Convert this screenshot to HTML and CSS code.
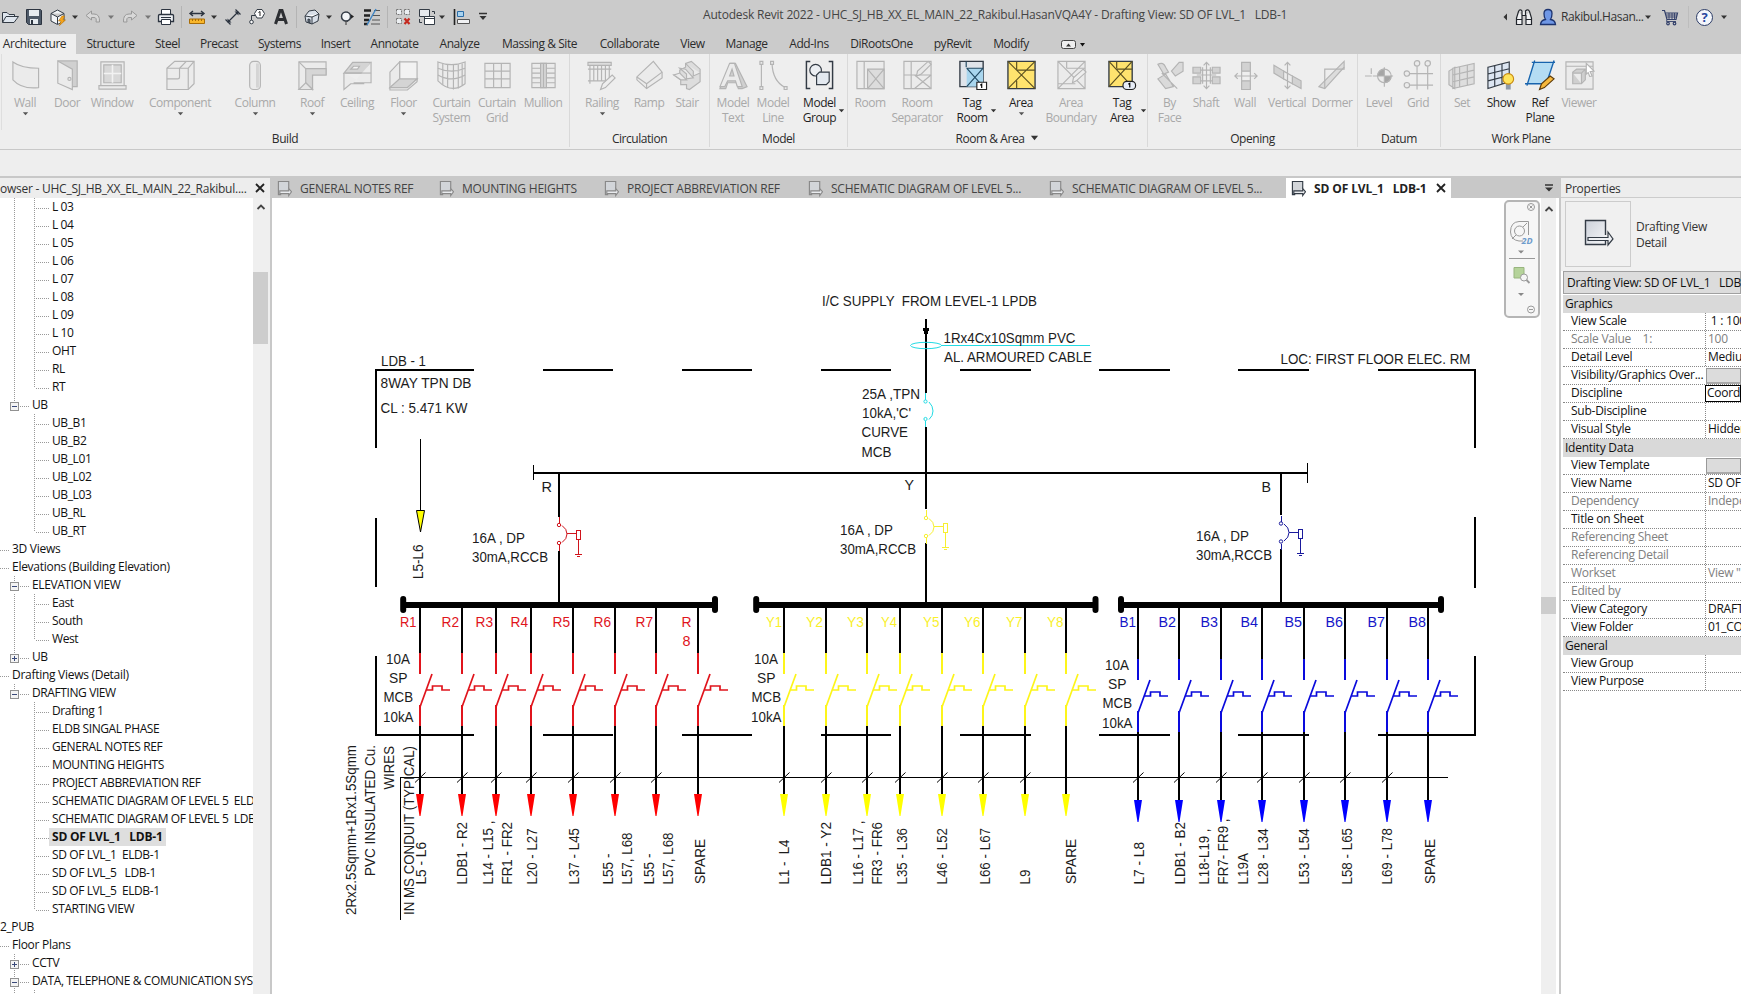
FILE: index.html
```html
<!DOCTYPE html>
<html lang="en">
<head>
<meta charset="utf-8">
<title>Autodesk Revit 2022</title>
<link rel="stylesheet" href="styles.css">
</head>
<body>
<svg class="defs" width="0" height="0">
  <defs>
    <symbol id="dd" viewBox="0 0 8 8"><path d="M1 2.5h6L4 6z" fill="currentColor"/></symbol>
    <symbol id="sheet" viewBox="0 0 16 18"><path d="M12.500 9V1.500h-11v14h3" fill="#d2d5d9" stroke="currentColor" stroke-width="1.200"/><path d="M3 11.500h9.500V9L15.500 12.500 12.500 16.500V14.500H3z" fill="#e9ebee" stroke="currentColor" stroke-width="1.200"/></symbol>
    <linearGradient id="pg" x1="0" y1="0" x2="1" y2="1"><stop offset="0" stop-color="#ccd1da"/><stop offset="1" stop-color="#f4f5f7"/></linearGradient>
    <g id="breaker" fill="none" stroke="currentColor" stroke-width="2">
      <path d="M0 45V66M0 97V118"/>
      <path d="M0 99L12 66M6 82H12.500V78H22V82H30" shape-rendering="auto" stroke-width="1.700"/>
    </g>
    <g id="way">
      <path d="M0 0V45M0 117V187" stroke="#000" stroke-width="2"/>
      <use href="#breaker"/>
      <path d="M-4 186H4L.5 208H-.5z" class="tip" shape-rendering="auto"/>
    </g>
    <path id="slash" d="M-5 5L5.500-5" stroke="#000" stroke-width="1" shape-rendering="auto"/>
    <g id="rccb" fill="none" stroke="currentColor" stroke-width="1">
      <path d="M.5 0V6M.5 28V34M8 16.500H17M19.500 23V37M16 37.500H23M18 39.500H21M17.500 13.500H21.500V22.500H17.500z"/>
      <g shape-rendering="auto"><circle cx="0" cy="8" r="1.700"/><circle cx="0" cy="26" r="1.700"/><path d="M3 8.500Q8 12 8 17T3 25.500"/></g>
    </g>
  </defs>
</svg>

<header class="titlebar">
  <div class="qat">
    <svg class="i" viewBox="0 0 18 18" fill="#dfe6ee" stroke="#333b45"><path d="M1.500 14.500V4.500H6L8 6.500H13.500V8"/><path d="M1.500 14.500L5 8.500H17.500L13 14.500z"/></svg>
    <svg class="i" viewBox="0 0 18 18"><path d="M1.500 1.500h14l1 1v14h-13l-2-2z" fill="#4d5968" stroke="#2c3440"/><path d="M4 2h10v6H4zM5 11h8v5H5z" fill="#e6ebf0"/><path d="M6 12h2v4H6z" fill="#2c3440"/></svg>
    <svg class="i" viewBox="0 0 18 18"><path d="M2 5.500L8.500 2 15 5.500V13L8.500 16.500 2 13zM2 5.500L8.500 9 15 5.500M8.500 9V16" fill="#f3f5f7" stroke="#333b45"/><path d="M13 8L9.500 13H12L10.500 17.500 16.500 12H14L15.500 8z" fill="#f7a51c" stroke="#b4720c" stroke-width=".6"/></svg>
    <svg class="a"><use href="#dd"/></svg>
    <svg class="i" viewBox="0 0 18 18"><path d="M2 7.500L7.500 3V6H10Q16 6 15.500 14H12Q13 9.500 10 9.500H7.500V12z" fill="#d8d8d8" stroke="#999"/></svg>
    <svg class="a dim"><use href="#dd"/></svg>
    <svg class="i" viewBox="0 0 18 18"><path d="M16 7.500L10.500 3V6H8Q2 6 2.500 14H6Q5 9.500 8 9.500H10.500V12z" fill="#d8d8d8" stroke="#999"/></svg>
    <svg class="a dim"><use href="#dd"/></svg>
    <svg class="i" viewBox="0 0 18 18" stroke="#2c3440"><path d="M4.500 7V1.500H13.500V7" fill="#fff"/><path d="M1.500 7.500Q1.500 6.500 3 6.500H15Q16.500 6.500 16.500 7.500V13.500H1.500z" fill="#eef0f3" stroke-width="1.300"/><path d="M4.500 11.500H13.500V16.500H4.500zM4 9.500H14" fill="#fff"/></svg>
    <i class="vr"></i>
    <svg class="i" viewBox="0 0 18 18"><path d="M2 5.500H16M5 3L2 5.500 5 8M13 3L16 5.500 13 8" fill="none" stroke="#2c3440" stroke-width="1.400"/><path d="M1.500 11h15v4.500h-15z" fill="#f8b62b" stroke="#a96d07"/><path d="M4.500 11v2M7.500 11v2M10.500 11v2M13.500 11v2" stroke="#a96d07"/></svg>
    <svg class="a"><use href="#dd"/></svg>
    <svg class="i" viewBox="0 0 18 18"><path d="M4 14L14 4M1.500 11.500L6.500 16.500M11.500 1.500L16.500 6.500" stroke="#2c3440" stroke-width="1.200"/><path d="M3.500 14.500V10.500L7.500 14.500zM14.500 3.500V7.500L10.500 3.500z" fill="#2c3440"/></svg>
    <svg class="i" viewBox="0 0 18 18"><path d="M6.500 5.500L9 1.500H14L16.500 5.500 14 10H9z" fill="#fff" stroke="#333b45"/><path d="M10.500 4.500L12 3.500V8" fill="none" stroke="#222"/><path d="M7 7.500H3.500V12" fill="none" stroke="#333b45"/><circle cx="3.500" cy="14" r="1.800" fill="#fff" stroke="#333b45"/></svg>
    <svg class="i" viewBox="0 0 18 18"><path d="M3.500 16L8 2.500H10L14.500 16M5.500 11.500H12.500" fill="none" stroke="#2d2f33" stroke-width="3"/></svg>
    <i class="vr"></i>
    <svg class="i" viewBox="0 0 18 18" stroke="#333b45"><path d="M2 8L6 3 12 2 16 6 15 13 9 16 3 14z" fill="#d8dfe8"/><path d="M2 8L9 9 16 6M9 9V16" fill="#fff"/><path d="M5 11V14L7 15V11.500z" fill="#6d7886"/></svg>
    <svg class="a"><use href="#dd"/></svg>
    <svg class="i" viewBox="0 0 18 18"><path d="M9 3.500L16 8.500 9 14z" fill="#222"/><circle cx="8" cy="8.500" r="4.500" fill="#f3f5f7" stroke="#333b45" stroke-width="1.500"/><path d="M8 13v4" stroke="#333"/></svg>
    <svg class="i" viewBox="0 0 18 18"><path d="M1 2.500H8M1 7.500H7M1 12H6M1 16H5" stroke="#222" stroke-width="2.600"/><path d="M11 2.500H17M10 7.500H17M9 12H17M8 16H17" stroke="#555"/><path d="M4 17L13 1" stroke="#3c83c4" stroke-width="1.400"/></svg>
    <i class="vr"></i>
    <svg class="i" viewBox="0 0 18 18"><path d="M2.500 1.500h5v5h-5zM10.500 1.500h5v5h-5zM2.500 10.500h5v5h-5z" fill="#eceff2" stroke="#777" stroke-dasharray="2 1"/><path d="M10.500 10.500L15.500 16M15.500 10.500L10.500 16" stroke="#c42a20" stroke-width="2.200"/></svg>
    <svg class="i" viewBox="0 0 18 18" stroke="#333b45"><path d="M1.500 1.500H11.500V8.500H1.500z" fill="#e6e9ed"/><path d="M6.500 8.500H16.500V16.500H6.500zM6.500 10.500H16.500" fill="#fff"/><path d="M14 3.500H16.500V6M4 14.500H1.500V11" fill="none"/></svg>
    <svg class="a"><use href="#dd"/></svg>
    <svg class="i" viewBox="0 0 18 18"><path d="M1.500 1V17" stroke="#222" stroke-width="1.600"/><path d="M4.500 3.500H10.500V8.500H4.500z" fill="#a9d3f0" stroke="#2a6da8"/><path d="M4.500 11.500H16.500V15.500H4.500z" fill="#f0f1f3" stroke="#555"/></svg>
    <svg class="a w10" viewBox="0 0 10 10"><path d="M1 1.500H9" stroke="#333" stroke-width="1.500"/><path d="M1.500 4H8.500L5 8z" fill="#333"/></svg>
  </div>
  <div class="apptitle">Autodesk Revit 2022 - UHC_SJ_HB_XX_EL_MAIN_22_Rakibul.HasanVQA4Y - Drafting View: SD OF LVL_1   LDB-1</div>
  <div class="account">
    <svg class="a" viewBox="0 0 8 8"><path d="M6 0.500V7.500L2.500 4z" fill="#333"/></svg>
    <svg class="i" viewBox="0 0 18 18" fill="#f0f1f3" stroke="#22262c" stroke-width="1.200"><path d="M3.500 3.500Q5 .5 7 3V8M10.500 8V3Q13 .5 14.500 3.500M3.500 3.500L1.500 10V16.500H7V7.500H11V16.500H16.500V10L14.500 3.500M1.500 11.500H7M11 11.500H16.500"/></svg>
    <svg class="i" viewBox="0 0 18 18"><path d="M1.500 16.500Q2 12 6.500 11.500Q5 9 5 5.500 5 1.500 9 1.500T13 5.500Q13 9 11.500 11.500 16 12 16.500 16.500z" fill="#6f97e6" stroke="#1d3470" stroke-width="1.300"/></svg>
    <span class="user">Rakibul.Hasan...</span>
    <svg class="a"><use href="#dd"/></svg>
    <svg class="i" viewBox="0 0 18 18" fill="none" stroke="#33406a" stroke-width="1.200"><path d="M1 2.500H3.500L6 11.500H15L16.500 5H4.200"/><path d="M5 7H16M5.500 9H15.500M8 5V11M11 5V11M13.500 5V11M6 11.500L5.500 13.500H15" stroke-width=".9"/><circle cx="7" cy="15.500" r="1.300"/><circle cx="13.500" cy="15.500" r="1.300"/></svg>
    <i class="vr light"></i>
    <span class="help">?</span>
    <svg class="a"><use href="#dd"/></svg>
  </div>
</header>

<nav class="tabs">
  <span class="on">Architecture</span><span>Structure</span><span>Steel</span><span>Precast</span><span>Systems</span><span>Insert</span><span>Annotate</span><span>Analyze</span><span>Massing &amp; Site</span><span>Collaborate</span><span>View</span><span>Manage</span><span>Add-Ins</span><span>DiRootsOne</span><span>pyRevit</span><span>Modify</span>
  <svg class="mini" viewBox="0 0 26 12"><rect x="1.500" y="1.500" width="14" height="8" rx="2" fill="#eee" stroke="#444"/><path d="M6 7.500H11L8.500 4.500z" fill="#333"/><path d="M20 4H25L22.500 7.500z" fill="#111"/></svg>
</nav>

<section class="ribbon">
  <div class="panel build">
    <div class="tools">
      <div class="b off"><svg class="ic" viewBox="0 0 32 32"><path d="M3 2.500Q12 9 29.500 9V29Q12 31 3 21z"/></svg><span>Wall</span><svg class="d"><use href="#dd"/></svg></div>
      <div class="b off"><svg class="ic" viewBox="0 0 32 32"><path d="M6 1.500H26V28H20" fill="#d0d0d0"/><path d="M6 1.500L21 10V31L6 24.500z"/><circle cx="18" cy="20" r="1.600"/></svg><span>Door</span></div>
      <div class="b off"><svg class="ic" viewBox="0 0 32 32"><path d="M4 2.500H28V27H4z"/><path d="M7 5.500H25V24H7z" fill="#d8d8d8"/><path d="M16 5.500V24M7 14.500H25" stroke="#f2f2f2" stroke-width="1.600"/><path d="M2 27H30V30.500H2z"/></svg><span>Window</span></div>
      <div class="b off"><svg class="ic" viewBox="0 0 32 32"><path d="M2 9L10 2H30V25L24 31H2z"/><path d="M2 20H13Q15 20 15 18V9L22 2M15 9H2M24 31V9L30 2M15 9H24" fill="none"/></svg><span>Component</span><svg class="d"><use href="#dd"/></svg></div>
      <div class="b off"><svg class="ic" viewBox="0 0 32 32"><rect x="10" y="2" width="11" height="29" rx="4"/><path d="M18 4V29" stroke="#d4d4d4" stroke-width="3"/></svg><span>Column</span><svg class="d"><use href="#dd"/></svg></div>
      <div class="b off"><svg class="ic" viewBox="0 0 32 32"><path d="M2 2.500H30V16H16V31H2z"/><path d="M2 2.500L9 9.500H30V16H16V31L9 24V9.500" fill="#d6d6d6"/><path d="M2 31L9 24 16 31z" fill="#e6e6e6"/></svg><span>Roof</span><svg class="d"><use href="#dd"/></svg></div>
      <div class="b off"><svg class="ic" viewBox="0 0 32 32"><path d="M2 14L11 3H30L23 14z" fill="#d4d4d4"/><path d="M30 3V24H12M2 14V31L9 25H23"/><path d="M2 14H30" /><path d="M9 10H16L18 7H12z" fill="#f5f5f5"/></svg><span>Ceiling</span></div>
      <div class="b off"><svg class="ic" viewBox="0 0 32 32"><path d="M12 2.500H30V21H12z" fill="#f2f2f2"/><path d="M2 13L12 2.500V20L2 29z"/><path d="M12 20H30L20 29H2z" fill="#d4d4d4"/><path d="M2 29H20L30 20V23L20 31.500H2z"/></svg><span>Floor</span><svg class="d"><use href="#dd"/></svg></div>
      <div class="b off"><svg class="ic" viewBox="0 0 32 32"><path d="M2 2.500Q16 8 30 2.500V25Q16 36 2 22z"/><path d="M2 9Q16 15 30 9M2 16Q16 24 30 16M7 4V26M12 5V29M18 5.500V31M23 5V30M27 4V27" fill="none"/></svg><span>Curtain<br>System</span></div>
      <div class="b off"><svg class="ic" viewBox="0 0 32 32"><path d="M3 4H29V29H3zM3 12H29M3 20H29M12 4V29M20 4V29"/></svg><span>Curtain<br>Grid</span></div>
      <div class="b off"><svg class="ic" viewBox="0 0 32 32"><path d="M4 4H28V29H4zM4 9H28M4 14H28M4 19H28M4 24H28"/><path d="M13 4H19V29H13zM16 4V29" fill="#d6d6d6"/></svg><span>Mullion</span></div>
    </div>
    <div class="pt">Build</div>
  </div>
  <div class="panel circ">
    <div class="tools">
      <div class="b off"><svg class="ic" viewBox="0 0 32 32"><path d="M1 3H25V6H1zM1 22H25M1 10H25M3 6V25M7 6V22M11 6V22M15 6V22M19 6V22M23 6V22" fill="#ddd"/><path d="M14 31L16 25 26 16 29 19 19 29z" fill="#eee"/></svg><span>Railing</span><svg class="d"><use href="#dd"/></svg></div>
      <div class="b off"><svg class="ic" viewBox="0 0 32 32"><path d="M3 18L20 2 29 13V19L13 30 3 21z"/><path d="M13 25L29 13M13 25L3 18M13 25V30" fill="none"/></svg><span>Ramp</span></div>
      <div class="b off"><svg class="ic" viewBox="0 0 32 32"><path d="M2 16H8V11L14 8 14 4 20 2 29 10V23L18 31 15 30V26H9V21z" fill="#ddd"/><path d="M2 16L9 21H15L8 14zM8 9L15 15V20L22 19 14 10zM14 4L22 12V17L29 14" /></svg><span>Stair</span></div>
    </div>
    <div class="pt">Circulation</div>
  </div>
  <div class="panel model">
    <div class="tools">
      <div class="b off"><svg class="ic" viewBox="0 0 32 32"><path d="M2 30L13 4H18L30 28 25 30H21L19 24H10L8 30z" fill="#d0d0d0"/><path d="M2 28L12 4H17L25 28H20L18 22H10L7 28zM12 17H16.500L14.500 10z"/></svg><span>Model<br>Text</span></div>
      <div class="b off"><svg class="ic" viewBox="0 0 32 32"><path d="M3.500 4V29M14.500 4Q15 22 28 29" fill="none"/><path d="M2 2H5V5H2zM2 28H5V31H2zM13 2H16V5H13zM27 28H30V31H27z"/></svg><span>Model<br>Line</span></div>
      <div class="b"><svg class="ic col" viewBox="0 0 32 32"><path d="M6.500 2H2.500V30H6.500M25.500 2H29.500V30H25.500" fill="none" stroke="#333b45" stroke-width="1.500"/><circle cx="12" cy="11" r="6" fill="#eceff3" stroke="#333b45" stroke-width="1.200"/><path d="M13 16L16 13H26V23L23 26H13z" fill="#e3e9f0" stroke="#333b45" stroke-width="1.200"/></svg><span class="two">Model<br>Group</span><svg class="side"><use href="#dd"/></svg></div>
    </div>
    <div class="pt">Model</div>
  </div>
  <div class="panel room">
    <div class="tools">
      <div class="b off"><svg class="ic" viewBox="0 0 32 32"><path d="M2 2H30V30H2zM9.500 2V30"/><path d="M13 10H30V30H13zM13 10L30 30M30 10L13 30" fill="#dcdcdc"/></svg><span>Room</span></div>
      <div class="b off"><svg class="ic" viewBox="0 0 32 32"><path d="M2 2H30V30H2zM9.500 2V30"/><path d="M13 16L30 30M30 16L13 30M2 16H30" /><path d="M15 17L16 12 27 2 30 5 20 15z" fill="#e8e8e8"/></svg><span>Room<br>Separator</span></div>
      <div class="b"><svg class="ic col" viewBox="0 0 32 32"><path d="M3 2H27V28H3z" fill="#dfe4ea" stroke="#333b45" stroke-width="1.400"/><path d="M10 9H27V28H10z" fill="#a9d6ee"/><path d="M10 9L27 28M27 9L10 28M9.500 2V8M10 9H27" stroke="#234a63" fill="none"/><path d="M20.500 23.500H30.500V31H20.500z" fill="#fff" stroke="#222"/><path d="M24 26.500L25.500 25.500V29.500" fill="none" stroke="#000"/></svg><span class="two">Tag<br>Room</span><svg class="side"><use href="#dd"/></svg></div>
      <div class="b"><svg class="ic col" viewBox="0 0 32 32"><path d="M2 2H30V30H2z" fill="#ffe36e" stroke="#333b45" stroke-width="1.400"/><path d="M2 2L30 30M30 2L2 30M11 2V10M11 11H30M11 22V30" fill="none" stroke="#5b5020"/></svg><span>Area</span><svg class="d"><use href="#dd"/></svg></div>
      <div class="b off"><svg class="ic" viewBox="0 0 32 32"><path d="M2 2H30V30H2zM2 2L30 30M30 2L2 30M11 2V9M11 9H30M2 25H20"/><path d="M17 24L18 19 28 10 31 13 21 22z" fill="#eee"/></svg><span>Area<br>Boundary</span></div>
      <div class="b"><svg class="ic col" viewBox="0 0 32 32"><path d="M2 2H26V28H2z" fill="#ffe36e" stroke="#333b45" stroke-width="1.400"/><path d="M2 2L26 28M26 2L2 28M10 2V9M10 10H26" fill="none" stroke="#5b5020"/><rect x="16.500" y="22.500" width="13" height="8.500" rx="4" fill="#e8eef8" stroke="#222"/><path d="M22 25.500L23.500 24.500V29" fill="none" stroke="#000"/></svg><span class="two">Tag<br>Area</span><svg class="side"><use href="#dd"/></svg></div>
    </div>
    <div class="pt">Room &amp; Area <svg class="pd" viewBox="0 0 10 8"><path d="M1 1.500H9L5 6.500z" fill="#333"/></svg></div>
  </div>
  <div class="panel opening">
    <div class="tools">
      <div class="b off"><svg class="ic" viewBox="0 0 32 32"><path d="M4 5Q10 2 12 8L15 13 10 15zM18 12L26 3H30V12L22 17zM4 20L12 15 20 28 12 30zM8 14L24 30" fill="#dadada"/></svg><span>By<br>Face</span></div>
      <div class="b off"><svg class="ic" viewBox="0 0 32 32"><path d="M2 8H10V14H2zM22 8H30V14H22zM2 18H10V25H2zM22 18H30V25H22z" fill="#d2d2d2"/><path d="M10 11H22M10 22H22M16 3V30M13 6L16 3 19 6M13 27L16 30 19 27M6 16H26M12 8V25M20 8V25" fill="none"/></svg><span>Shaft</span></div>
      <div class="b off"><svg class="ic" viewBox="0 0 32 32"><path d="M12 3H21V12H12zM12 22H21V31H12z" fill="#d2d2d2"/><path d="M12 12V22M21 12V22M5 17H28M8 14L5 17 8 20M25 14L28 17 25 20" fill="none"/></svg><span>Wall</span></div>
      <div class="b off"><svg class="ic" viewBox="0 0 32 32"><path d="M2 6L12 12V20L2 14zM21 17L30 22V30L21 25z" fill="#d2d2d2"/><path d="M12 12L21 17V25L12 20zM16 3V30M13 6L16 3 19 6M13 27L16 30 19 27"/></svg><span>Vertical</span></div>
      <div class="b off"><svg class="ic" viewBox="0 0 32 32"><path d="M2 28L28 2V8L8 30z" fill="#dcdcdc"/><path d="M8 30V10H28V8" fill="none"/></svg><span>Dormer</span></div>
    </div>
    <div class="pt">Opening</div>
  </div>
  <div class="panel datum">
    <div class="tools">
      <div class="b off"><svg class="ic" viewBox="0 0 32 32"><path d="M1 17H8M7.500 9V15M9 17H30M21 8V28"/><circle cx="21" cy="17" r="7"/><path d="M21 10A7 7 0 0 0 14 17H21zM21 24A7 7 0 0 0 28 17H21z" fill="#a5a5a5"/></svg><span>Level</span></div>
      <div class="b off"><svg class="ic" viewBox="0 0 32 32"><path d="M14.500 7V31M25.500 7V31M7 14.500H31M7 26.500H31"/><circle cx="14.500" cy="4" r="2.800"/><circle cx="25.500" cy="4" r="2.800"/><circle cx="4" cy="14.500" r="2.800"/><circle cx="4" cy="26.500" r="2.800"/></svg><span>Grid</span></div>
    </div>
    <div class="pt">Datum</div>
  </div>
  <div class="panel plane">
    <div class="tools">
      <div class="b off"><svg class="ic" viewBox="0 0 32 32"><path d="M2 12L8 8V30L2 26zM6 9L28 4V25L6 30zM6 16L28 11M6 23L28 18M13 7.500V28.500M21 5.500V26.500" fill="#dedede"/></svg><span>Set</span></div>
      <div class="b"><svg class="ic col" viewBox="0 0 32 32"><path d="M2 8L24 2.500V23L2 30zM2 15L24 9.500M2 22L24 16.500M9 6V28M16.500 4.500V25.500" fill="#dde6f2" stroke="#333b45" stroke-width="1.200"/><path d="M20.500 25H25.500V31H20.500z" fill="#8f9aa8"/><circle cx="23" cy="20" r="5.500" fill="#ffe45c" stroke="#c78a12"/></svg><span>Show</span></div>
      <div class="b"><svg class="ic col" viewBox="0 0 32 32"><path d="M9 3H29L22 25H2z" fill="#b4dcf3"/><path d="M7 3H31M0 25H24M10 1L2 27M30 1L22 25" fill="none" stroke="#1763ad" stroke-width="1.400"/><path d="M15 31L17 25 26 17 30 20 20 29z" fill="#f6b83c" stroke="#5c3a0a"/></svg><span>Ref<br>Plane</span></div>
      <div class="b off"><svg class="ic" viewBox="0 0 32 32"><path d="M2 2.500H30V30.500H2zM2 7H30"/><path d="M9 13L13 10H22V21L18 25H9zM18 25V14H9M18 14L22 10" fill="#cfcfcf"/><path d="M23 4L31 12 27 12.500 29 17 26.500 17.500 25 13.500 23 15z" fill="#fff"/></svg><span>Viewer</span></div>
    </div>
    <div class="pt">Work Plane</div>
  </div>
</section>

<main class="work">
  <aside class="browser">
    <div class="bhead"><span>owser - UHC_SJ_HB_XX_EL_MAIN_22_Rakibul....</span><svg class="x" viewBox="0 0 10 10"><path d="M1 1L9 9M9 1L1 9" stroke="#222" stroke-width="1.800"/></svg></div>
    <div class="bbody">
      <div class="tree">
        <div class="r l2 v">L 03</div><div class="r l2 v">L 04</div><div class="r l2 v">L 05</div><div class="r l2 v">L 06</div><div class="r l2 v">L 07</div><div class="r l2 v">L 08</div><div class="r l2 v">L 09</div><div class="r l2 v">L 10</div><div class="r l2 v">OHT</div><div class="r l2 v">RL</div><div class="r l2 v end">RT</div>
        <div class="r l1"><b class="pm"></b>UB</div>
        <div class="r l2">UB_B1</div><div class="r l2">UB_B2</div><div class="r l2">UB_L01</div><div class="r l2">UB_L02</div><div class="r l2">UB_L03</div><div class="r l2">UB_RL</div><div class="r l2 end">UB_RT</div>
        <div class="r l0">3D Views</div>
        <div class="r l0">Elevations (Building Elevation)</div>
        <div class="r l1"><b class="pm"></b>ELEVATION VIEW</div>
        <div class="r l2 v">East</div><div class="r l2 v">South</div><div class="r l2 v end">West</div>
        <div class="r l1"><b class="pm plus"></b>UB</div>
        <div class="r l0">Drafting Views (Detail)</div>
        <div class="r l1"><b class="pm"></b>DRAFTING VIEW</div>
        <div class="r l2">Drafting 1</div><div class="r l2">ELDB SINGAL PHASE</div><div class="r l2">GENERAL NOTES REF</div><div class="r l2">MOUNTING HEIGHTS</div><div class="r l2">PROJECT ABBREVIATION REF</div><div class="r l2">SCHEMATIC DIAGRAM OF LEVEL 5  ELDB</div><div class="r l2">SCHEMATIC DIAGRAM OF LEVEL 5  LDB</div><div class="r l2"><span class="sel">SD OF LVL_1   LDB-1</span></div><div class="r l2">SD OF LVL_1  ELDB-1</div><div class="r l2">SD OF LVL_5   LDB-1</div><div class="r l2">SD OF LVL_5  ELDB-1</div><div class="r l2 end">STARTING VIEW</div>
        <div class="r top">2_PUB</div>
        <div class="r l0">Floor Plans</div>
        <div class="r l1 cont"><b class="pm plus"></b>CCTV</div>
        <div class="r l1 cont"><b class="pm"></b>DATA, TELEPHONE &amp; COMUNICATION SYSTEM</div>
        <div class="r l2 v"></div>
      </div>
      <div class="scroll"><svg class="up" viewBox="0 0 10 10"><path d="M1.500 7L5 3.500 8.500 7" fill="none" stroke="#444" stroke-width="1.800"/></svg><i class="thumb"></i></div>
    </div>
  </aside>

  <section class="center">
    <div class="doctabs">
      <div class="dt"><svg><use href="#sheet"/></svg>GENERAL NOTES REF</div>
      <div class="dt"><svg><use href="#sheet"/></svg>MOUNTING HEIGHTS</div>
      <div class="dt"><svg><use href="#sheet"/></svg>PROJECT ABBREVIATION REF</div>
      <div class="dt"><svg><use href="#sheet"/></svg>SCHEMATIC DIAGRAM OF LEVEL 5...</div>
      <div class="dt"><svg><use href="#sheet"/></svg>SCHEMATIC DIAGRAM OF LEVEL 5...</div>
      <div class="dt act"><svg><use href="#sheet"/></svg><span>SD OF LVL_1   LDB-1</span><svg class="x" viewBox="0 0 10 10"><path d="M1 1L9 9M9 1L1 9" stroke="#222" stroke-width="1.800"/></svg></div>
      <svg class="list" viewBox="0 0 10 10"><path d="M1 2H9" stroke="#333" stroke-width="1.500"/><path d="M1 4.500H9L5 8.500z" fill="#333"/></svg>
    </div>
    <div class="canvas">
      <svg class="drawing" viewBox="272 198 1269 796" shape-rendering="crispEdges">
        <!-- enclosure outline -->
        <g stroke="#000" stroke-width="2" fill="none">
          <path d="M375 370H474M543 370H613M682 370H752M821 370H891M960 370H1031M1099 370H1170M1238 370H1309M1378 370H1476"/>
          <path d="M375 735H474M543 735H613M682 735H752M821 735H891M960 735H1031M1099 735H1170M1238 735H1309M1378 735H1476"/>
          <path d="M376 370V448M376 518V587M376 656V735M1475 370V448M1475 517V588M1475 656V735"/>
          <path d="M533 473H1307M559 473V517M559 551V602M926 319V393M926 427V509M926 543V602M1281 473V515M1281 549V602"/>
        </g>
        <path d="M533.500 465V480M1307.500 463V483M420.500 439V511M400.500 920V777.500H1448" stroke="#000" fill="none"/>
        <path d="M922.500 328H929.500L927 336H925z"/>
        <path d="M416.500 510.500H424.500L420.500 532z" fill="#ff0" stroke="#000" shape-rendering="auto"/>
        <!-- incoming cable and main breaker -->
        <g fill="none" stroke="#22dbe4" shape-rendering="auto">
          <ellipse cx="926" cy="345.500" rx="15.500" ry="3.200"/>
          <path d="M941 345.500H1090M925.500 393V400M925.500 421V427"/>
          <circle cx="925.500" cy="401.500" r="1.600"/><circle cx="925.500" cy="419" r="1.600"/>
          <path d="M929 402Q933 406 933 411T929 419.500"/>
        </g>
        <use href="#rccb" x="559" y="517" color="#d0141c"/>
        <use href="#rccb" x="926" y="510" color="#f7f030"/>
        <use href="#rccb" x="1281" y="515.500" color="#1a1a9c"/>
        <!-- busbars -->
        <path d="M403 605H715M756 605H1096M1121 605H1441" stroke="#000" stroke-width="6"/>
        <path d="M403.200 599V610M715 599V610M756.200 599V610M1095.500 599V610M1121 599V610M1441 599V610" stroke="#000" stroke-width="6" stroke-linecap="round" shape-rendering="auto"/>
        <g class="ways-r">
          <use href="#way" x="420" y="608"/><use href="#way" x="462" y="608"/><use href="#way" x="496" y="608"/><use href="#way" x="531" y="608"/><use href="#way" x="573" y="608"/><use href="#way" x="615" y="608"/><use href="#way" x="656" y="608"/><use href="#way" x="698" y="608"/>
        </g>
        <g class="ways-y">
          <use href="#way" x="784" y="608"/><use href="#way" x="826" y="608"/><use href="#way" x="867" y="608"/><use href="#way" x="900" y="608"/><use href="#way" x="942" y="608"/><use href="#way" x="983" y="608"/><use href="#way" x="1025" y="608"/><use href="#way" x="1066" y="608"/>
        </g>
        <path d="M1138 607V616M1179 607V616M1221 607V616M1262 607V616M1304 607V616M1345 607V616M1387 607V616M1428 607V616" stroke="#000" stroke-width="2"/>
        <g class="ways-b">
          <use href="#way" x="1138" y="614"/><use href="#way" x="1179" y="614"/><use href="#way" x="1221" y="614"/><use href="#way" x="1262" y="614"/><use href="#way" x="1304" y="614"/><use href="#way" x="1345" y="614"/><use href="#way" x="1387" y="614"/><use href="#way" x="1428" y="614"/>
        </g>
        <g>
          <use href="#slash" x="420" y="777.500"/><use href="#slash" x="462" y="777.500"/><use href="#slash" x="496" y="777.500"/><use href="#slash" x="531" y="777.500"/><use href="#slash" x="573" y="777.500"/><use href="#slash" x="615" y="777.500"/><use href="#slash" x="656" y="777.500"/>
          <use href="#slash" x="784" y="777.500"/><use href="#slash" x="826" y="777.500"/><use href="#slash" x="867" y="777.500"/><use href="#slash" x="900" y="777.500"/><use href="#slash" x="942" y="777.500"/><use href="#slash" x="983" y="777.500"/><use href="#slash" x="1025" y="777.500"/>
          <use href="#slash" x="1138" y="777.500"/><use href="#slash" x="1179" y="777.500"/><use href="#slash" x="1221" y="777.500"/><use href="#slash" x="1262" y="777.500"/><use href="#slash" x="1304" y="777.500"/><use href="#slash" x="1345" y="777.500"/><use href="#slash" x="1387" y="777.500"/>
        </g>
        <g class="t">
          <text x="381" y="366" textLength="45" lengthAdjust="spacingAndGlyphs">LDB - 1</text>
          <text x="380.500" y="388" textLength="91" lengthAdjust="spacingAndGlyphs">8WAY TPN DB</text>
          <text x="380.500" y="413" textLength="87" lengthAdjust="spacingAndGlyphs">CL : 5.471 KW</text>
          <text x="822" y="306" textLength="215" lengthAdjust="spacingAndGlyphs">I/C SUPPLY  FROM LEVEL-1 LPDB</text>
          <text x="943.500" y="343" textLength="132" lengthAdjust="spacingAndGlyphs">1Rx4Cx10Sqmm PVC</text>
          <text x="944" y="362" textLength="148" lengthAdjust="spacingAndGlyphs">AL. ARMOURED CABLE</text>
          <text x="1280.500" y="364" textLength="190" lengthAdjust="spacingAndGlyphs">LOC: FIRST FLOOR ELEC. RM</text>
          <text x="862" y="399" textLength="58" lengthAdjust="spacingAndGlyphs">25A ,TPN</text>
          <text x="862" y="418" textLength="49" lengthAdjust="spacingAndGlyphs">10kA,'C'</text>
          <text x="861.500" y="437" textLength="46.500" lengthAdjust="spacingAndGlyphs">CURVE</text>
          <text x="861.500" y="457" textLength="30" lengthAdjust="spacingAndGlyphs">MCB</text>
          <text x="541.500" y="492" textLength="10.500" lengthAdjust="spacingAndGlyphs">R</text>
          <text x="904.500" y="490" textLength="9.500" lengthAdjust="spacingAndGlyphs">Y</text>
          <text x="1261.500" y="492" textLength="9.500" lengthAdjust="spacingAndGlyphs">B</text>
          <text x="472" y="543" textLength="53" lengthAdjust="spacingAndGlyphs">16A , DP</text>
          <text x="472" y="562" textLength="76" lengthAdjust="spacingAndGlyphs">30mA,RCCB</text>
          <text x="840" y="535" textLength="53" lengthAdjust="spacingAndGlyphs">16A , DP</text>
          <text x="840" y="554" textLength="76" lengthAdjust="spacingAndGlyphs">30mA,RCCB</text>
          <text x="1196" y="541" textLength="53" lengthAdjust="spacingAndGlyphs">16A , DP</text>
          <text x="1196" y="560" textLength="76" lengthAdjust="spacingAndGlyphs">30mA,RCCB</text>
          <text x="386" y="663.500" textLength="24" lengthAdjust="spacingAndGlyphs">10A</text><text x="389" y="682.500" textLength="18.500" lengthAdjust="spacingAndGlyphs">SP</text><text x="383.500" y="701.500" textLength="29.500" lengthAdjust="spacingAndGlyphs">MCB</text><text x="383" y="721.500" textLength="30.500" lengthAdjust="spacingAndGlyphs">10kA</text>
          <text x="754" y="663.500" textLength="24" lengthAdjust="spacingAndGlyphs">10A</text><text x="757" y="682.500" textLength="18.500" lengthAdjust="spacingAndGlyphs">SP</text><text x="751.500" y="701.500" textLength="29.500" lengthAdjust="spacingAndGlyphs">MCB</text><text x="751" y="721.500" textLength="30.500" lengthAdjust="spacingAndGlyphs">10kA</text>
          <text x="1105" y="669.500" textLength="24" lengthAdjust="spacingAndGlyphs">10A</text><text x="1108" y="688.500" textLength="18.500" lengthAdjust="spacingAndGlyphs">SP</text><text x="1102.500" y="707.500" textLength="29.500" lengthAdjust="spacingAndGlyphs">MCB</text><text x="1102" y="727.500" textLength="30.500" lengthAdjust="spacingAndGlyphs">10kA</text>
        </g>
        <g class="t red">
          <text x="400" y="627" textLength="16.500" lengthAdjust="spacingAndGlyphs">R1</text><text x="441.500" y="627" textLength="17.500" lengthAdjust="spacingAndGlyphs">R2</text><text x="475.500" y="627" textLength="17.500" lengthAdjust="spacingAndGlyphs">R3</text><text x="510.500" y="627" textLength="17.500" lengthAdjust="spacingAndGlyphs">R4</text><text x="552.500" y="627" textLength="17.500" lengthAdjust="spacingAndGlyphs">R5</text><text x="593.500" y="627" textLength="17.500" lengthAdjust="spacingAndGlyphs">R6</text><text x="635.500" y="627" textLength="17.500" lengthAdjust="spacingAndGlyphs">R7</text><text x="681.500" y="627" textLength="10" lengthAdjust="spacingAndGlyphs">R</text><text x="682.500" y="646" textLength="8" lengthAdjust="spacingAndGlyphs">8</text>
        </g>
        <g class="t yellow">
          <text x="766" y="627" textLength="16" lengthAdjust="spacingAndGlyphs">Y1</text><text x="806" y="627" textLength="17" lengthAdjust="spacingAndGlyphs">Y2</text><text x="847" y="627" textLength="17" lengthAdjust="spacingAndGlyphs">Y3</text><text x="881" y="627" textLength="16" lengthAdjust="spacingAndGlyphs">Y4</text><text x="923" y="627" textLength="16.500" lengthAdjust="spacingAndGlyphs">Y5</text><text x="964" y="627" textLength="16.500" lengthAdjust="spacingAndGlyphs">Y6</text><text x="1006" y="627" textLength="16.500" lengthAdjust="spacingAndGlyphs">Y7</text><text x="1047" y="627" textLength="16.500" lengthAdjust="spacingAndGlyphs">Y8</text>
        </g>
        <g class="t blue">
          <text x="1119.500" y="627" textLength="16.500" lengthAdjust="spacingAndGlyphs">B1</text><text x="1158.500" y="627" textLength="17.500" lengthAdjust="spacingAndGlyphs">B2</text><text x="1200.500" y="627" textLength="17.500" lengthAdjust="spacingAndGlyphs">B3</text><text x="1240.500" y="627" textLength="17.500" lengthAdjust="spacingAndGlyphs">B4</text><text x="1284.500" y="627" textLength="17.500" lengthAdjust="spacingAndGlyphs">B5</text><text x="1325.500" y="627" textLength="17.500" lengthAdjust="spacingAndGlyphs">B6</text><text x="1367.500" y="627" textLength="17.500" lengthAdjust="spacingAndGlyphs">B7</text><text x="1408.500" y="627" textLength="17.500" lengthAdjust="spacingAndGlyphs">B8</text>
        </g>
        <!-- vertical notes and circuit references -->
        <g class="t">
          <text transform="translate(423 579) rotate(-90)" textLength="34.500" lengthAdjust="spacingAndGlyphs">L5-L6</text>
          <text transform="translate(356 915) rotate(-90)" textLength="170" lengthAdjust="spacingAndGlyphs">2Rx2.5Sqmm+1Rx1.5Sqmm</text>
          <text transform="translate(375 876) rotate(-90)" textLength="131" lengthAdjust="spacingAndGlyphs">PVC INSULATED Cu.</text>
          <text transform="translate(394 789.500) rotate(-90)" textLength="43.500" lengthAdjust="spacingAndGlyphs">WIRES</text>
          <text transform="translate(414 915) rotate(-90)" textLength="169" lengthAdjust="spacingAndGlyphs">IN MS CONDUIT (TYPICAL)</text>
          <text transform="translate(426 884.500) rotate(-90)" textLength="42.500" lengthAdjust="spacingAndGlyphs">L5 - L6</text>
          <text transform="translate(467 884.500) rotate(-90)" textLength="62.500" lengthAdjust="spacingAndGlyphs">LDB1 - R2</text>
          <text transform="translate(493 884.500) rotate(-90)" textLength="64" lengthAdjust="spacingAndGlyphs">L14 - L15 ,</text>
          <text transform="translate(512 884.500) rotate(-90)" textLength="62.500" lengthAdjust="spacingAndGlyphs">FR1 - FR2</text>
          <text transform="translate(537 884.500) rotate(-90)" textLength="56" lengthAdjust="spacingAndGlyphs">L20 - L27</text>
          <text transform="translate(579 884.500) rotate(-90)" textLength="56.500" lengthAdjust="spacingAndGlyphs">L37 - L45</text>
          <text transform="translate(613 884.500) rotate(-90)" textLength="31" lengthAdjust="spacingAndGlyphs">L55 -</text>
          <text transform="translate(632 884.500) rotate(-90)" textLength="52" lengthAdjust="spacingAndGlyphs">L57, L68</text>
          <text transform="translate(654 884.500) rotate(-90)" textLength="31" lengthAdjust="spacingAndGlyphs">L55 -</text>
          <text transform="translate(673 884.500) rotate(-90)" textLength="52" lengthAdjust="spacingAndGlyphs">L57, L68</text>
          <text transform="translate(705 884) rotate(-90)" textLength="45" lengthAdjust="spacingAndGlyphs">SPARE</text>
          <text transform="translate(789 884.500) rotate(-90)" textLength="45" lengthAdjust="spacingAndGlyphs">L1 -  L4</text>
          <text transform="translate(831 884.500) rotate(-90)" textLength="62.500" lengthAdjust="spacingAndGlyphs">LDB1 - Y2</text>
          <text transform="translate(863 884.500) rotate(-90)" textLength="64" lengthAdjust="spacingAndGlyphs">L16 - L17 ,</text>
          <text transform="translate(882 884.500) rotate(-90)" textLength="62.500" lengthAdjust="spacingAndGlyphs">FR3 - FR6</text>
          <text transform="translate(907 884.500) rotate(-90)" textLength="56.500" lengthAdjust="spacingAndGlyphs">L35 - L36</text>
          <text transform="translate(947 884.500) rotate(-90)" textLength="56.500" lengthAdjust="spacingAndGlyphs">L46 - L52</text>
          <text transform="translate(990 884.500) rotate(-90)" textLength="56.500" lengthAdjust="spacingAndGlyphs">L66 - L67</text>
          <text transform="translate(1030 884.500) rotate(-90)" textLength="15" lengthAdjust="spacingAndGlyphs">L9</text>
          <text transform="translate(1076 884) rotate(-90)" textLength="45" lengthAdjust="spacingAndGlyphs">SPARE</text>
          <text transform="translate(1144 884.500) rotate(-90)" textLength="42.500" lengthAdjust="spacingAndGlyphs">L7 - L8</text>
          <text transform="translate(1185 884.500) rotate(-90)" textLength="62.500" lengthAdjust="spacingAndGlyphs">LDB1 - B2</text>
          <text transform="translate(1209 884.500) rotate(-90)" textLength="56" lengthAdjust="spacingAndGlyphs">L18-L19 ,</text>
          <text transform="translate(1228 884.500) rotate(-90)" textLength="66" lengthAdjust="spacingAndGlyphs">FR7- FR9 ,</text>
          <text transform="translate(1248 884.500) rotate(-90)" textLength="31.500" lengthAdjust="spacingAndGlyphs">L19A</text>
          <text transform="translate(1268 884.500) rotate(-90)" textLength="56" lengthAdjust="spacingAndGlyphs">L28 - L34</text>
          <text transform="translate(1309 884.500) rotate(-90)" textLength="56" lengthAdjust="spacingAndGlyphs">L53 - L54</text>
          <text transform="translate(1352 884.500) rotate(-90)" textLength="56.500" lengthAdjust="spacingAndGlyphs">L58 - L65</text>
          <text transform="translate(1392 884.500) rotate(-90)" textLength="56.500" lengthAdjust="spacingAndGlyphs">L69 - L78</text>
          <text transform="translate(1435 884) rotate(-90)" textLength="45" lengthAdjust="spacingAndGlyphs">SPARE</text>
        </g>
      </svg>
      <div class="navbar">
        <svg viewBox="0 0 36 118" fill="none" stroke="#999">
          <rect x="1" y="1" width="34" height="116" rx="4" fill="#f6f6f6" stroke="#b5b5b5" stroke-width="2"/>
          <circle cx="27" cy="7" r="3.500"/><path d="M25.500 5.500L28.500 8.500M28.500 5.500L25.500 8.500"/>
          <path d="M19 41H15Q7 40 6.500 32 6.500 22 15 21.500H24.500V35"/><circle cx="15.500" cy="31" r="5"/><path d="M12 35L8 39M19 27L23 23"/>
          <path d="M14 50.500H20L17 53.500z" fill="#888" stroke="none"/><path d="M5 58.500H31"/>
          <path d="M10 67.500H20V78H10z" fill="#b5d39a" stroke="#98b57f"/><circle cx="20" cy="77.500" r="3.500" fill="#f6f6f6"/><path d="M22.500 80L25.500 83" stroke-width="1.800"/>
          <path d="M14 93H20L17 96z" fill="#888" stroke="none"/>
          <circle cx="27" cy="109.500" r="3.500"/><path d="M25 109.500H29"/>
          <text x="17.500" y="43.500" class="two-d">2D</text>
        </svg>
      </div>
      <div class="scroll main"><svg class="up" viewBox="0 0 10 10"><path d="M1.500 7L5 3.500 8.500 7" fill="none" stroke="#444" stroke-width="1.800"/></svg><i class="thumb"></i></div>
    </div>
  </section>

  <aside class="props">
    <div class="phead">Properties</div>
    <div class="ptype">
      <div class="pic"><svg viewBox="0 0 30 28"><path d="M21.500 16V1.500H1.500V25.500H21.500V22" fill="url(#pg)" stroke="#333b45" stroke-width="1.400"/><path d="M4 18.500H24V13L29 20 24 26V21.500H4z" fill="#eef0f3" stroke="#333b45" stroke-width="1.200"/></svg></div>
      <div class="ptxt">Drafting View<br>Detail</div>
    </div>
    <div class="psel">Drafting View: SD OF LVL_1   LDB-1</div>
    <div class="grid">
      <div class="gh">Graphics</div>
      <div class="g"><span>View Scale</span><span> 1 : 100</span></div>
      <div class="g ro"><span>Scale Value    1:</span><span>100</span></div>
      <div class="g"><span>Detail Level</span><span>Medium</span></div>
      <div class="g"><span>Visibility/Graphics Over...</span><span class="btn"></span></div>
      <div class="g"><span>Discipline</span><span class="focus">Coordination</span></div>
      <div class="g"><span>Sub-Discipline</span><span></span></div>
      <div class="g"><span>Visual Style</span><span>Hidden Line</span></div>
      <div class="gh">Identity Data</div>
      <div class="g"><span>View Template</span><span class="btn"></span></div>
      <div class="g"><span>View Name</span><span>SD OF LVL</span></div>
      <div class="g ro"><span>Dependency</span><span>Independent</span></div>
      <div class="g"><span>Title on Sheet</span><span></span></div>
      <div class="g ro"><span>Referencing Sheet</span><span></span></div>
      <div class="g ro"><span>Referencing Detail</span><span></span></div>
      <div class="g ro"><span>Workset</span><span>View "Draft</span></div>
      <div class="g ro"><span>Edited by</span><span></span></div>
      <div class="g"><span>View Category</span><span>DRAFTING</span></div>
      <div class="g"><span>View Folder</span><span>01_CONST</span></div>
      <div class="gh">General</div>
      <div class="g"><span>View Group</span><span></span></div>
      <div class="g"><span>View Purpose</span><span></span></div>
    </div>
  </aside>
</main>
</body>
</html>
```
FILE: styles.css
```css
* { box-sizing: border-box; }
html, body { margin: 0; height: 100%; overflow: hidden; }
body {
  display: flex; flex-direction: column;
  width: 1741px; height: 994px;
  background: #eee; color: #2b2b2b;
  font: 12px/15px "Open Sans", "Noto Sans", sans-serif;
  letter-spacing: -0.45px;
}
svg { display: block; flex: none; }
.defs { position: absolute; }

/* title bar */
.titlebar { flex: none; height: 34px; background: #cbcbcb; display: grid; grid-template-columns: 703px 798px 240px; }
.qat, .account { display: grid; align-items: center; justify-items: start; height: 34px; }
.qat { padding-left: 1px; grid-template-columns: 24px 24px 22px 13px 23px 14px 23px 13px 24px 7px 22px 14px 24px 24px 24px 7px 22px 13px 25px 24px 7px 24px 20px 15px 25px 10px; }
.account { grid-template-columns: 14px 24px 22px 83px 17px 27px 8px 24px 10px; }
.i { width: 18px; height: 18px; }
.a { width: 8px; height: 8px; color: #333; }
.a.dim { color: #777; }
.a.w10 { width: 10px; height: 10px; }
.vr { width: 1px; height: 22px; background: #b4b4b4; }
.vr.light { background: #bdbdbd; }
.apptitle { white-space: pre; line-height: 29px; color: #444; letter-spacing: -0.19px; }
.user { line-height: 16px; color: #333; letter-spacing: -0.4px; }
.help { width: 17px; height: 17px; border: 1px solid #2c3c66; border-radius: 50%; background: #f4f6fb; color: #2745a0; font-weight: 700; font-size: 13px; line-height: 15px; text-align: center; letter-spacing: 0; }

/* ribbon tabs */
.tabs { flex: none; height: 20px; background: #cbcbcb; display: grid; grid-template-columns: 76px 69px 45px 58px 63px 49px 69px 61px 99px 81px 45px 63px 62px 83px 59px 58px 60px; }
.tabs span { text-align: center; line-height: 20px; white-space: nowrap; }
.tabs .on { background: #eee; padding-right: 7px; }
.mini { width: 26px; height: 12px; margin: 5px 0 0 20px; }

/* ribbon */
.ribbon { flex: none; height: 122px; display: grid; grid-template-rows: 95px; grid-template-columns: 570px 140px 138px 300px 210px 83px 300px; background: linear-gradient(#c8c8c8, #c8c8c8) 0 95px / 100% 1px no-repeat; }
.panel { border-right: 1px solid #d9d9d9; display: flex; flex-direction: column; margin-bottom: 2px; }
.panel.plane { border: 0; width: 160px; }
.tools { display: grid; height: 76px; }
.build .tools { margin-left: 1px; border-left: 1px solid #dedede; grid-template-columns: 46px 38px 52px 84px 66px 48px 42px 51px 45px 46px 46px; }
.circ .tools { padding-left: 7px; grid-template-columns: 50px 44px 32px; }
.model .tools { padding-left: 1px; grid-template-columns: 44px 36px 57px; }
.room .tools { grid-template-columns: 44px 50px 60px 38px 62px 40px; }
.opening .tools { padding-left: 5px; grid-template-columns: 33px 40px 38px 46px 44px; }
.datum .tools { padding-left: 2px; grid-template-columns: 38px 40px; }
.plane .tools { padding-left: 2px; grid-template-columns: 38px 40px 38px 40px; }
.b { display: flex; flex-direction: column; align-items: center; padding-top: 5px; text-align: center; position: relative; white-space: nowrap; color: #1f1f1f; }
.b.off { color: #a9a9a9; }
.ic { width: 31px; height: 32px; margin-bottom: 4px; fill: #ebebeb; stroke: #b4b4b4; stroke-width: 1.2; }
.ic.col { stroke: none; stroke-width: 1.2; }
.d { width: 7px; height: 7px; color: #555; }
.side { position: absolute; width: 7px; height: 7px; left: calc(50% + 18px); top: 53px; color: #333; }
.pt { flex: 1; display: flex; justify-content: center; align-items: center; gap: 6px; line-height: 15px; padding-bottom: 1px; }
.build .pt { padding-left: 1px; }
.pd { width: 9px; height: 8px; }

/* workspace */
.work { flex: 1; min-height: 0; display: grid; grid-template-columns: 270px 1289px 182px; border-top: 2px solid #c8c8c8; }
.browser { border-right: 0; min-width: 0; display: flex; flex-direction: column; }
.bhead { height: 20px; display: flex; justify-content: space-between; align-items: center; padding-right: 5px; white-space: nowrap; color: #333; background: #ededed; letter-spacing: -0.25px; }
.x { width: 10px; height: 10px; }
.bbody { flex: 1; min-height: 0; display: flex; background: #efefef; }
.tree {
  --v: repeating-linear-gradient(#999 0 1px, transparent 1px 2px);
  --h: repeating-linear-gradient(90deg, #999 0 1px, transparent 1px 2px);
  width: 253px; background: #fff; overflow: hidden; color: #111; letter-spacing: -0.4px;
}
.r { height: 18px; line-height: 18px; white-space: pre; overflow: hidden; }
.top { padding-left: 0; }
.l0 { padding-left: 12px; letter-spacing: -0.28px; background: var(--h) 0 10px / 9px 1px no-repeat; }
.l1 { display: flex; align-items: center; padding-left: 10px; background: var(--v) 14px 0 / 1px 6px no-repeat, var(--h) 20px 10px / 9px 1px no-repeat; }
.l1.cont { background: var(--v) 14px 0 / 1px 18px no-repeat, var(--h) 20px 10px / 9px 1px no-repeat; }
.l2 { padding-left: 52px; background: var(--v) 34px 0 / 1px 18px no-repeat, var(--h) 36px 10px / 13px 1px no-repeat; }
.l2.end { background-size: 1px 10px, 13px 1px; }
.l2.v { background: var(--v) 34px 0 / 1px 18px no-repeat, var(--h) 36px 10px / 13px 1px no-repeat, var(--v) 14px 0 / 1px 18px no-repeat; }
.l2.v.end { background-size: 1px 10px, 13px 1px, 1px 18px; }
.pm { flex: none; width: 9px; height: 9px; margin: 3px 13px 0 0; border: 1px solid #919191; background: linear-gradient(#3a4a7a, #3a4a7a) center / 5px 1px no-repeat #f4f4f4; }
.pm.plus { background: linear-gradient(#3a4a7a, #3a4a7a) center / 5px 1px no-repeat, linear-gradient(#3a4a7a, #3a4a7a) center / 1px 5px no-repeat #f4f4f4; }
.sel { display: inline-block; height: 18px; margin-left: -3px; padding: 0 3px; background: #dedede; font-weight: 700; letter-spacing: -0.22px; }
.scroll { width: 15px; background: #efefef; display: flex; flex-direction: column; align-items: center; }
.up { width: 10px; height: 10px; margin-top: 4px; flex: none; }
.thumb { width: 15px; height: 72px; margin-top: 60px; background: #cdcdcd; }

.center { min-width: 0; border-left: 2px solid #c8c8c8; display: flex; flex-direction: column; }
.doctabs { height: 20px; background: #c8c8c8; display: grid; grid-template-columns: 162px 165px 204px 241px 242px 165px 103px; }
.dt { display: flex; align-items: center; padding-left: 5px; gap: 8px; white-space: pre; color: #444; letter-spacing: -0.22px; }
.dt svg { width: 15px; height: 17px; color: #888; }
.dt.act { background: #fff; color: #222; font-weight: 700; letter-spacing: -0.12px; }
.dt.act svg { color: #333b45; }
.dt.act svg.x { width: 10px; height: 10px; }
.dt span { width: 114px; }
.doctabs .list { width: 10px; height: 10px; margin: 5px 0 0 93px; }
.canvas { flex: 1; min-height: 0; display: grid; grid-template-columns: 1269px 15px 3px; grid-template-rows: 796px; background: #fff; position: relative; }
.drawing { width: 1269px; height: 796px; }
.t { font: 15.5px "Liberation Sans", Arial, sans-serif; letter-spacing: 0; fill: #1c1c1c; }
.t text { white-space: pre; }
.red { fill: #e0141c; }
.yellow { fill: #f9f02c; }
.blue { fill: #1616c8; }
.tip { fill: var(--tip); }
.ways-r { color: #e0141c; --tip: #f00; }
.ways-y { color: #fdf51a; --tip: #ff0; }
.ways-b { color: #0a0adc; --tip: #00f; }
.navbar { position: absolute; left: 1232px; top: 2px; width: 36px; height: 118px; }
.navbar svg { width: 36px; height: 118px; }
.two-d { font: 700 italic 9px "Open Sans", sans-serif; fill: #6d9bcb; stroke: none; letter-spacing: 0; }
.main { background: #efefef; }
.main .up { margin-top: 6px; }
.main .thumb { height: 17px; margin-top: 383px; }

/* properties */
.props { min-width: 0; border-left: 2px solid #c8c8c8; overflow: hidden; background: #fff; color: #111; }
.phead { height: 20px; line-height: 21px; padding-left: 4px; background: #ededed; border-bottom: 1px solid #ccc; color: #333; letter-spacing: -0.25px; }
.ptype { height: 73px; padding: 3px 0 0 4px; display: flex; gap: 5px; align-items: flex-start; background: #f0f0f0; color: #333; }
.pic { width: 66px; height: 66px; border: 1px solid #ccc; display: flex; align-items: center; justify-content: center; }
.pic svg { width: 30px; height: 28px; margin-left: 2px; margin-bottom: 3px; }
.ptxt { line-height: 16px; padding-top: 18px; letter-spacing: -0.3px; }
.psel { margin-left: 2px; height: 23px; line-height: 21px; border: 1px solid #a0a0a0; background: #dcdcdc; padding-left: 3px; white-space: pre; letter-spacing: -0.25px; }
.grid { margin: 1px 0 0 2px; letter-spacing: -0.25px; }
.gh { height: 18px; line-height: 18px; background: #d9d9d9; padding-left: 2px; }
.g { height: 18px; display: grid; grid-template-columns: 142px 36px; line-height: 16px; white-space: pre; border-bottom: 1px dotted #888; }
.g span { overflow: hidden; padding-left: 8px; }
.g span + span { border-left: 1px dotted #888; padding-left: 2px; }
.ro { color: #808080; }
.g span.btn { background: #dcdcdc; border: 1px solid #999; border-bottom: 2px solid #aaa; margin: 1px 0 0 1px; }
.g span.focus { border: 1px solid #000; line-height: 14px; padding-left: 1px; }
```
